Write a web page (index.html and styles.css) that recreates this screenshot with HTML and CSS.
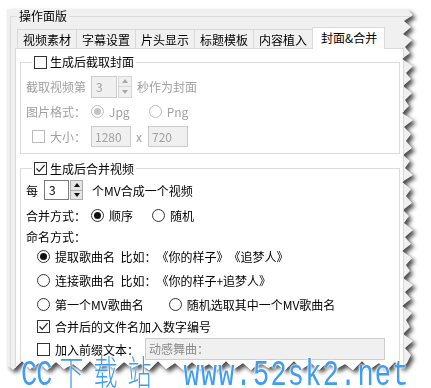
FILE: index.html
```html
<!DOCTYPE html>
<html>
<head>
<meta charset="utf-8">
<link rel="stylesheet" href="styles.css">
</head>
<body>
<div class="stage">
  <div class="shadow">
    <div class="win">
      <fieldset class="outer">
        <legend class="outer-title">操作面版</legend>
        <div class="tabs">
          <div class="tab">视频素材</div>
          <div class="tab">字幕设置</div>
          <div class="tab">片头显示</div>
          <div class="tab">标题模板</div>
          <div class="tab">内容植入</div>
          <div class="tab active">封面&amp;合并</div>
        </div>
        <div class="page">
          <fieldset class="grp g1">
            <legend><span class="lg"><span class="cb"></span>生成后截取封面</span></legend>
            <div class="row r1 dis">
              <span class="lbl">截取视频第</span>
              <span class="spin dis-spin"><span class="val">3</span><span class="btns"><i class="up"></i><i class="dn"></i></span></span>
              <span class="after">秒作为封面</span>
            </div>
            <div class="row r2 dis">
              <span class="lbl">图片格式：</span>
              <span class="opt"><span class="rb on off"></span>Jpg</span>
              <span class="opt"><span class="rb off"></span>Png</span>
            </div>
            <div class="row r3 dis">
              <span class="lbl"><span class="cb off size-cb"></span>大小：</span>
              <span class="box w40">1280</span>
              <span class="x">x</span>
              <span class="box w40">720</span>
            </div>
          </fieldset>

          <fieldset class="grp g2">
            <legend><span class="lg"><span class="cb chk"><svg viewBox="0 0 11 11" width="11" height="11"><polyline points="1.5,5.5 4.2,8.3 9.6,2.2" fill="none" stroke="#222" stroke-width="1.2"/></svg></span>生成后合并视频</span></legend>
            <div class="row q1">
              <span class="mei">每</span>
              <span class="spin en-spin"><span class="val">3</span><span class="btns"><i class="up"></i><i class="dn"></i></span></span>
              <span class="after2">个MV合成一个视频</span>
            </div>
            <div class="row q2">
              <span class="lbl">合并方式：</span>
              <span class="opt"><span class="rb on"></span>顺序</span>
              <span class="opt"><span class="rb"></span>随机</span>
            </div>
            <div class="row q3">
              <span class="lbl">命名方式：</span>
            </div>
            <div class="row q4 ind">
              <span class="opt"><span class="rb on"></span>提取歌曲名&nbsp;&nbsp;比如：《你的样子》《追梦人》</span>
            </div>
            <div class="row q5 ind">
              <span class="opt"><span class="rb"></span>连接歌曲名&nbsp;&nbsp;比如：《你的样子+追梦人》</span>
            </div>
            <div class="row q6 ind">
              <span class="opt first"><span class="rb"></span>第一个MV歌曲名</span>
              <span class="opt"><span class="rb"></span>随机选取其中一个MV歌曲名</span>
            </div>
            <div class="row q7 ind">
              <span class="opt"><span class="cb chk"><svg viewBox="0 0 11 11" width="11" height="11"><polyline points="1.5,5.5 4.2,8.3 9.6,2.2" fill="none" stroke="#222" stroke-width="1.2"/></svg></span>合并后的文件名加入数字编号</span>
            </div>
            <div class="row q8 ind">
              <span class="opt pre"><span class="cb"></span>加入前缀文本：</span>
              <span class="box prefix">动感舞曲：</span>
            </div>
          </fieldset>
        </div>
      </fieldset>
    </div>
  </div>
  <div class="wm"><span class="lat">CC</span><span class="cjk">下载站</span><span class="lat www">www.52sk2.net</span></div>
</div>
</body>
</html>
```

FILE: styles.css
```css
* { box-sizing: border-box; }
html, body { margin: 0; background: #fff; }
body {
  font-family: "Noto Sans CJK SC", "Noto Sans", sans-serif;
  font-size: 12px;
  color: #000;
  text-spacing-trim: space-all;
}
.stage { position: relative; width: 431px; height: 388px; overflow: hidden; }
.shadow {
  padding: 9px 0 0 7px;
  filter: drop-shadow(3px 3px 2px rgba(0,0,0,0.7));
}
.win {
  width: 408px;
  height: 370px;
  background: #f0f0f0;
  overflow: hidden;
  clip-path: polygon(0 0, 400px 0, 406px 6px, 397px 12px, 404px 18px, 396px 25px, 405px 31px, 398px 38px, 403px 44px, 395px 50px, 406px 57px, 399px 64px, 404px 70px, 396px 77px, 405px 84px, 398px 91px, 402px 97px, 395px 104px, 406px 111px, 397px 118px, 404px 125px, 399px 132px, 405px 139px, 396px 146px, 403px 152px, 398px 159px, 406px 166px, 395px 173px, 404px 180px, 399px 187px, 405px 194px, 396px 201px, 402px 207px, 397px 214px, 406px 221px, 398px 228px, 404px 235px, 395px 242px, 405px 249px, 399px 256px, 403px 262px, 396px 269px, 406px 276px, 398px 283px, 404px 290px, 395px 297px, 405px 304px, 399px 311px, 403px 318px, 396px 325px, 406px 332px, 398px 339px, 404px 346px, 400px 354px, 395px 359px, 388px 353px, 380px 361px, 372px 354px, 363px 360px, 355px 352px, 346px 361px, 338px 355px, 329px 360px, 321px 353px, 312px 361px, 304px 354px, 295px 360px, 287px 352px, 278px 361px, 270px 355px, 261px 359px, 253px 353px, 244px 361px, 236px 354px, 227px 360px, 219px 352px, 210px 361px, 202px 355px, 193px 360px, 185px 353px, 176px 361px, 168px 354px, 159px 360px, 151px 352px, 142px 361px, 134px 355px, 125px 359px, 117px 353px, 108px 361px, 100px 354px, 91px 360px, 83px 352px, 74px 361px, 66px 355px, 57px 360px, 49px 353px, 40px 361px, 32px 354px, 23px 360px, 15px 352px, 6px 361px, 0 356px);
}

fieldset { margin: 0; padding: 0; border: 1px solid #dcdcdc; min-width: 0; }
legend { padding: 0; line-height: 14px; }

.outer { margin-left: 3px; width: 420px; height: 420px; }
.outer-title { margin-left: 6px; padding: 0 2px; }

.tabs {
  margin: 4px 0 0 6px;
  height: 21px;
  display: flex;
  align-items: flex-end;
}
.tab {
  height: 19px;
  padding: 2px 5px 0;
  line-height: 16px;
  border: 1px solid #d9d9d9;
  border-bottom: none;
  background: #f0f0f0;
  margin-right: -1px;
  white-space: nowrap;
}
.tab.active {
  position: relative;
  z-index: 1;
  height: 22px;
  margin: 0 0 -1px 0;
  padding: 2px 7px 0 8px;
  background: #fff;
}

.page {
  margin-left: 4px;
  width: 389px;
  height: 360px;
  background: #fff;
  border: 1px solid #d9d9d9;
  padding-top: 0;
}

.grp { border-color: #dcdcdc; margin: 0 3px 0 4px; }
.grp legend { margin-left: 6px; padding: 0 2px; }
.g1 { margin-top: 6px; padding: 4px 0 3px 5px; }
.g2 { margin-top: 8px; padding: 3px 0 0 5px; height: 220px; }

.lg { display: inline-flex; align-items: center; height: 14px; }
.lg .cb { margin-right: 3px; }

.cb {
  display: inline-flex;
  align-items: center;
  justify-content: center;
  width: 13px;
  height: 13px;
  border: 1px solid #333;
  background: #fff;
  flex: none;
}
.cb.off { border-color: #bcbcbc; }
.rb {
  display: inline-block;
  position: relative;
  width: 13px;
  height: 13px;
  border: 1px solid #333;
  border-radius: 50%;
  background: #fff;
  flex: none;
}
.rb.on::after {
  content: "";
  position: absolute;
  left: 2px; top: 2px;
  width: 7px; height: 7px;
  border-radius: 50%;
  background: #111;
}
.rb.off { border-color: #bcbcbc; }
.rb.on.off::after { background: #c4c4c4; }

.row { display: flex; align-items: center; white-space: nowrap; }
.dis { color: #a0a0a0; }
.lbl { width: 65px; flex: none; display: inline-flex; align-items: center; }
.r1 { height: 24px; }
.r2 { height: 25px; }
.r3 { height: 26px; }

.after { margin-left: 5px; }

.spin { display: inline-flex; height: 22px; flex: none; }
.spin .val {
  width: 26px;
  height: 100%;
  line-height: 20px;
  padding-left: 4px;
  border: 1px solid #7a7a7a;
  background: #fff;
}
.spin .btns {
  width: 14px;
  margin-left: 1px;
  display: flex;
  flex-direction: column;
  border: 1px solid #acacac;
  background: #e5e5e5;
}
.spin .btns i {
  flex: 1;
  display: flex;
  align-items: center;
  justify-content: center;
}
.spin .btns i.up { border-bottom: 1px solid #acacac; }
.spin .btns i::before {
  content: "";
  width: 0; height: 0;
  border-left: 3.5px solid transparent;
  border-right: 3.5px solid transparent;
}
.spin .btns i.up::before { border-bottom: 4px solid #111; }
.spin .btns i.dn::before { border-top: 4px solid #111; }

.dis-spin .val { border-color: #cccccc; background: #f0f0f0; }
.dis-spin .btns { border-color: #d6d6d6; background: #f0f0f0; }
.dis-spin .btns i.up { border-bottom-color: #d6d6d6; }
.dis-spin .btns i.up::before { border-bottom-color: #a8a8a8; }
.dis-spin .btns i.dn::before { border-top-color: #a8a8a8; }

.en-spin { height: 20px; }
.en-spin .val { width: 25px; line-height: 18px; }
.en-spin .btns { width: 13px; }

.opt { display: inline-flex; align-items: center; margin-right: 19px; }
.opt .rb, .opt .cb { margin-right: 5px; }
.size-cb { margin-left: 6px; margin-right: 5px; }

.box {
  display: inline-block;
  height: 21px;
  line-height: 19px;
  padding-left: 3px;
  border: 1px solid #cccccc;
  background: #f0f0f0;
  color: #a0a0a0;
  flex: none;
}
.w40 { width: 40px; }
.x { margin: 0 6px 0 5px; }

.q1 { height: 22px; }
.q2 { height: 28px; }
.q3 { height: 15px; }
.q4 { height: 24px; }
.q5 { height: 24px; }
.q6 { height: 25px; }
.q7 { height: 18px; }
.q8 { height: 28px; }
.mei { margin-right: 6px; }
.after2 { margin-left: 9px; }
.ind { padding-left: 11px; }
.opt.first { margin-right: 25px; }
.opt.pre { margin-right: 0; width: 108px; }
.prefix { width: 240px; height: 22px; line-height: 20px; color: #8a8a8a; padding-left: 3px; }

.wm {
  position: absolute;
  left: 21px;
  top: 356px;
  color: #3d9df3;
  white-space: nowrap;
  transform: scaleY(1.4);
  transform-origin: 0 0;
  text-shadow: 0 0 1px #fff, 0 0 2px #fff, 0 0 2px #fff;
  line-height: 22px;
}
.wm .lat { font-family: "Liberation Mono", monospace; font-size: 27px; letter-spacing: -1px; }
.wm .cjk { font-family: "Noto Sans CJK SC", sans-serif; font-weight: 300; font-size: 24px; letter-spacing: 10px; margin-left: 8px; }
.wm .www { letter-spacing: 1.2px; margin-left: 22px; }
```
